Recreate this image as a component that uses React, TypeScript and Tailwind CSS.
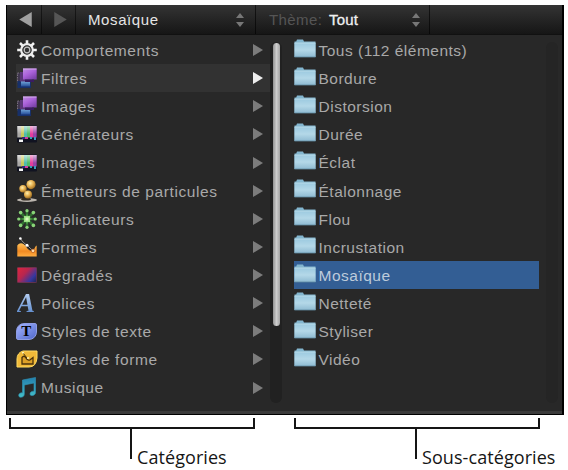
import type { ReactNode } from "react";

const GearIcon = () => (
  <svg viewBox="0 0 20 20" className="h-5 w-5">
    <g stroke="#f1f1f1" strokeWidth="2.6">
      <path d="M10 0.2V4M10 16v3.8M0.2 10H4M16 10h3.8M3 3l2.8 2.8M14.2 14.2L17 17M3 17l2.8-2.8M14.2 5.8L17 3" />
    </g>
    <circle cx="10" cy="10" r="5.8" fill="none" stroke="#ededed" strokeWidth="2.2" />
    <circle cx="10" cy="10" r="4.3" fill="#383838" />
    <circle cx="10" cy="10" r="2.8" fill="#333" stroke="#c4c4c4" strokeWidth="1.2" />
  </svg>
);

const FilterIcon = () => (
  <svg viewBox="0 0 20 20" className="h-5 w-5">
    <defs>
      <linearGradient id="violet" x1="0" y1="0" x2="0.7" y2="1">
        <stop offset="0" stopColor="#bf90e2" />
        <stop offset="0.5" stopColor="#ac63dc" />
        <stop offset="1" stopColor="#7c43ab" />
      </linearGradient>
      <linearGradient id="navy" x1="0" y1="0" x2="0" y2="1">
        <stop offset="0" stopColor="#80b7e4" />
        <stop offset="1" stopColor="#244b96" />
      </linearGradient>
    </defs>
    <path d="M0.5 5h5v9h-5z" fill="#40364f" stroke="#8b8291" strokeWidth="0.8" strokeDasharray="1.5 1" />
    <path d="M0.5 13h13.5v7H0.5z" fill="#17306a" />
    <path d="M4 12.5h9v6H4z" fill="url(#navy)" />
    <path d="M3 4h12v9.5H3z" fill="#5a3678" />
    <path d="M6 0.5h13.7v11H6z" fill="url(#violet)" />
    <path d="M6 1h13.5" stroke="#dfbef2" strokeWidth="0.8" />
    <path d="M8 11.5h9v2.5H8z" fill="#3a1c61" />
  </svg>
);

const TestPatternIcon = () => (
  <svg viewBox="0 0 20 20" className="h-5 w-5">
    <defs>
      <linearGradient id="shine" x1="0" y1="0" x2="0" y2="1">
        <stop offset="0" stopColor="#fff" stopOpacity="0.65" />
        <stop offset="1" stopColor="#fff" stopOpacity="0" />
      </linearGradient>
    </defs>
    <rect y="1.5" width="20" height="17" rx="1" fill="#111321" />
    <path d="M0.3 2H4v11.5H0.3z" fill="#aaa9a5" />
    <path d="M4 2h3v11.5H4z" fill="#c7c75a" />
    <path d="M7 2h3v11.5H7z" fill="#50bbaa" />
    <path d="M10 2h3v11.5h-3z" fill="#4eba67" />
    <path d="M13 2h3v11.5h-3z" fill="#e33c9c" />
    <path d="M16 2h3.7v11.5H16z" fill="#9a42a6" />
    <path d="M0.3 2h19.4v8H0.3z" fill="url(#shine)" />
    <path d="M5 13h3v2H5z" fill="#36277d" />
    <path d="M8 13h3v2H8z" fill="#d43d9b" />
    <path d="M13 13h2v2h-2zM17 13h2v3h-2z" fill="#3a9aba" />
    <path d="M2 15.5h4v2.5H2z" fill="#f5f5f5" />
  </svg>
);

const EmitterIcon = () => (
  <svg viewBox="0 0 20 22" className="h-[22px] w-5">
    <defs>
      <radialGradient id="gold" cx="0.4" cy="0.35" r="0.65">
        <stop offset="0" stopColor="#fff0ae" />
        <stop offset="0.5" stopColor="#e8b454" />
        <stop offset="1" stopColor="#a06f22" />
      </radialGradient>
    </defs>
    <ellipse cx="10" cy="20" rx="10" ry="1.9" fill="#bbb5ae" />
    <ellipse cx="9" cy="19.2" rx="5" ry="1.4" fill="#332b22" />
    <circle cx="14" cy="4.6" r="4.6" fill="url(#gold)" />
    <circle cx="6" cy="8.8" r="3.7" fill="url(#gold)" />
    <circle cx="11" cy="14.4" r="4" fill="url(#gold)" />
  </svg>
);

const ReplicatorIcon = () => (
  <svg viewBox="0 0 20 20" className="h-5 w-5">
    <path d="M10 1v18M1 10h18M3.5 3.5l13 13M16.5 3.5l-13 13" stroke="#316e31" strokeWidth="2.6" />
    <g fill="#89d478">
      <circle cx="10" cy="1.7" r="1.6" />
      <circle cx="10" cy="18.3" r="1.6" />
      <circle cx="1.7" cy="10" r="1.6" />
      <circle cx="18.3" cy="10" r="1.6" />
      <circle cx="3.6" cy="3.6" r="1.8" />
      <circle cx="16.4" cy="3.6" r="1.8" />
      <circle cx="3.6" cy="16.4" r="1.8" />
      <circle cx="16.4" cy="16.4" r="1.8" />
    </g>
    <path d="M10 5.5v9M5.5 10h9" stroke="#58a94e" strokeWidth="1.6" />
    <rect x="7" y="7" width="6" height="6" fill="#9be084" />
    <rect x="8.5" y="8.5" width="3" height="3" fill="#d6f8bd" />
  </svg>
);

const ShapeIcon = () => (
  <svg viewBox="0 0 20 20" className="h-5 w-5">
    <defs>
      <linearGradient id="orange" x1="0" y1="0" x2="0" y2="1">
        <stop offset="0" stopColor="#ffc15a" />
        <stop offset="0.6" stopColor="#f08a22" />
        <stop offset="1" stopColor="#ffad42" />
      </linearGradient>
    </defs>
    <path d="M0.3 8.5C3 4.5 7 6.5 9 9.5c2 3.5 5 5.5 7.5 3.5 1.4-1.2 1.5-4 3.2-4.5v11H0.3z" fill="url(#orange)" />
    <path d="M3.2 1c1.5 3 4 5.5 7 7.3l5.8 5.5" fill="none" stroke="#26201c" strokeWidth="1.6" />
    <path d="M3.2 1c1.5 3 4 5.5 7 7.3l5.8 5.5" fill="none" stroke="#ddd" strokeWidth="0.6" />
    <circle cx="3.4" cy="1.5" r="1.3" fill="#fff" />
    <circle cx="10" cy="8.3" r="1.5" fill="#fff" />
    <circle cx="16" cy="13.8" r="1.8" fill="#ffe0b0" stroke="#a64813" strokeWidth="0.6" />
  </svg>
);

const GradientIcon = () => (
  <svg viewBox="0 0 20 20" className="h-5 w-5">
    <defs>
      <linearGradient id="redblue" x1="0" y1="0.1" x2="1" y2="0.8">
        <stop offset="0" stopColor="#dc253e" />
        <stop offset="0.4" stopColor="#b7264f" />
        <stop offset="0.8" stopColor="#3537a0" />
        <stop offset="1" stopColor="#232b65" />
      </linearGradient>
    </defs>
    <rect x="0.3" y="2.5" width="19.4" height="15" rx="0.8" fill="url(#redblue)" stroke="#7a3550" strokeWidth="0.7" />
  </svg>
);

const FontIcon = () => (
  <span className="bg-gradient-to-b from-[#c4daf8] to-[#5583c8] bg-clip-text pr-px font-['Liberation_Serif',serif] text-[27px] leading-[26px] font-bold text-transparent italic">
    A
  </span>
);

const TextStyleIcon = () => (
  <span className="-ml-px flex h-[17px] w-[21px] items-center justify-center rounded-tl-[8px] rounded-tr-[2px] rounded-br-[8px] rounded-bl-[2px] border border-[#8d9ce4] bg-gradient-to-br from-[#a5b4ff] to-[#5268ca] font-['Liberation_Serif',serif] text-[15px] leading-none font-bold text-black">
    T
  </span>
);

const ShapeStyleIcon = () => (
  <svg viewBox="0 0 22 18" className="-ml-px h-[18px] w-[22px] shrink-0">
    <path d="M7 1h14v7q-1 9-8 9H1V9Q1 3 7 1z" fill="#f0b938" stroke="#ffdb63" />
    <path d="M6 14V7.5C7.5 5.5 9 6 10 8c1 1.8 3.5 3 4.5 1.5L17 7.5V14z" fill="#dca028" stroke="#49320b" strokeWidth="1.3" />
    <path d="M7 3l4 5" stroke="#49320b" />
    <path d="M6 2.7h2M11 8h2" stroke="#fff4b0" strokeWidth="1.5" />
  </svg>
);

const MusicIcon = () => (
  <svg viewBox="0 0 20 21" className="h-[21px] w-5">
    <defs>
      <linearGradient id="teal" x1="0" y1="0" x2="0" y2="1">
        <stop offset="0" stopColor="#2380af" />
        <stop offset="1" stopColor="#44bfc7" />
      </linearGradient>
    </defs>
    <path
      d="M5.5 3L18.5 0.5v15.2c0 3-5.5 4-5.5 1.3 0-2 2-3 4-2.7V6L7.3 8v9.3c0 3.4-5.6 4-5.6 1.2 0-2 1.8-3 3.8-2.7z"
      fill="url(#teal)"
      stroke="#2f96b8"
      strokeWidth="0.6"
    />
  </svg>
);

const FolderIcon = () => (
  <svg viewBox="0 0 22 19" className="h-[19px] w-[22px] shrink-0">
    <defs>
      <linearGradient id="folder" x1="0" y1="0" x2="0" y2="1">
        <stop offset="0" stopColor="#9ccae0" />
        <stop offset="0.5" stopColor="#b4d8e8" />
        <stop offset="1" stopColor="#8fbbd2" />
      </linearGradient>
    </defs>
    <path d="M0.5 18V2.5h1.7L3 0.5h6l1 2h11.5V18z" fill="#83b6cf" />
    <path d="M0.5 4h21v14h-21z" fill="url(#folder)" />
    <path d="M0.5 4h21" stroke="#c1dfeb" strokeWidth="0.8" />
    <path d="M0.5 18h21" stroke="#608ba1" strokeWidth="0.8" />
  </svg>
);

const Arrow = ({ className }: { className: string }) => (
  <svg viewBox="0 0 10 12" className={className} fill="currentColor">
    <path d="M0 0l10 6-10 6z" />
  </svg>
);

const Stepper = () => (
  <svg viewBox="0 0 8 14" className="h-3.5 w-2" fill="#777">
    <path d="M0 5l4-5 4 5zM0 9h8l-4 5z" />
  </svg>
);

interface Category {
  name: string;
  icon: ReactNode;
  active?: boolean;
}

const categories: Category[] = [
  { name: "Comportements", icon: <GearIcon /> },
  { name: "Filtres", icon: <FilterIcon />, active: true },
  { name: "Images", icon: <FilterIcon /> },
  { name: "Générateurs", icon: <TestPatternIcon /> },
  { name: "Images", icon: <TestPatternIcon /> },
  { name: "Émetteurs de particules", icon: <EmitterIcon /> },
  { name: "Réplicateurs", icon: <ReplicatorIcon /> },
  { name: "Formes", icon: <ShapeIcon /> },
  { name: "Dégradés", icon: <GradientIcon /> },
  { name: "Polices", icon: <FontIcon /> },
  { name: "Styles de texte", icon: <TextStyleIcon /> },
  { name: "Styles de forme", icon: <ShapeStyleIcon /> },
  { name: "Musique", icon: <MusicIcon /> },
];

const folders = [
  "Tous (112 éléments)",
  "Bordure",
  "Distorsion",
  "Durée",
  "Éclat",
  "Étalonnage",
  "Flou",
  "Incrustation",
  "Mosaïque",
  "Netteté",
  "Styliser",
  "Vidéo",
];

const Callout = ({ label, className }: { label: string; className: string }) => (
  <div className={className}>
    <div className="h-[10.5px] border-x-2 border-b-2 border-[#151515]" />
    <div className="ml-[121px] flex h-[30px] border-l-2 border-[#151515]">
      <span className="mt-[13px] ml-[5px] font-['Open_Sans',sans-serif] text-[18px] leading-[30px] tracking-[0.07px] whitespace-nowrap text-[#151515]">
        {label}
      </span>
    </div>
  </div>
);

const App = () => {
  return (
    <div className="h-[470px] w-[568px] overflow-hidden bg-white pt-[5px] pl-[6px] font-['Liberation_Sans',sans-serif] text-[15px]">
      <div className="flex h-[410px] w-[558px] flex-col border-r-2 border-b border-l border-black bg-[#282828]">
        <div className="flex h-[30px] shrink-0 items-stretch border-b border-[#111] bg-gradient-to-b from-[#343434] to-[#161616]">
          <div className="flex w-[35px] items-center border-r border-black/50 pl-3">
            <Arrow className="h-[15px] w-[13px] rotate-180 text-[#a0a0a0]" />
          </div>
          <div className="flex w-[34px] items-center border-r border-black/50 pl-3">
            <Arrow className="h-[15px] w-[13px] text-[#565656]" />
          </div>
          <div className="flex w-[180px] items-center justify-between border-r border-black/60 pr-[11px] pl-3 tracking-[0.6px] text-[#e5e5e5]">
            <span className="pt-0.5">Mosaïque</span>
            <Stepper />
          </div>
          <div className="flex w-[174px] items-center border-r border-black/60 pl-[13px]">
            <span className="w-[60px] pt-0.5 tracking-[0.4px] text-[#555]">Thème:</span>
            <span className="grow pt-0.5 tracking-[0.2px] text-[#f0f0f0] [-webkit-text-stroke:0.3px_#f0f0f0]">Tout</span>
            <div className="pr-[9px]">
              <Stepper />
            </div>
          </div>
        </div>

        <div className="flex grow">
          <ul className="w-[263px] shrink-0 pt-px pl-[9px] text-[15.5px] tracking-[0.6px] text-[#a9a9a9]">
            {categories.map((item, index) => (
              <li
                key={index}
                className={`flex h-[28.125px] items-center pr-[7px] pl-px ${item.active ? "bg-[#323232]" : ""}`}
              >
                <span className="flex w-6 shrink-0 items-center">{item.icon}</span>
                <span className="grow pt-px whitespace-nowrap">{item.name}</span>
                <Arrow className={`h-3 w-2.5 ${item.active ? "text-[#eee]" : "text-[#7c7c7c]"}`} />
              </li>
            ))}
          </ul>

          <div className="mt-[7px] mb-2 flex w-3 justify-center rounded-full bg-[#212121]">
            <div className="mt-px h-[283px] w-[7px] rounded-full bg-gradient-to-r from-[#929292] via-[#cdcdcd] to-[#a3a3a3]" />
          </div>

          <ul className="ml-[11.5px] w-[245px] pt-px text-[15.5px] tracking-[0.5px] text-[#a9a9a9]">
            {folders.map((name) => (
              <li
                key={name}
                className={`flex h-[28.125px] items-center gap-[3px] ${
                  name === "Mosaïque" ? "bg-[#335e94] text-[#bdcbdb]" : ""
                }`}
              >
                <span className="-mt-1">
                  <FolderIcon />
                </span>
                <span className="pt-px whitespace-nowrap">{name}</span>
              </li>
            ))}
          </ul>

          <div className="mt-[7px] mb-2 ml-[7px] w-3 rounded-full bg-[#252525]" />
        </div>

        <div className="h-[3px] shrink-0 bg-[#3a3a3a]" />
      </div>

      <div className="flex gap-[39px] pt-[3px] pl-[3px]">
        <Callout label="Catégories" className="w-[246px]" />
        <Callout label="Sous-catégories" className="w-[246px]" />
      </div>
    </div>
  );
};

export default App;
